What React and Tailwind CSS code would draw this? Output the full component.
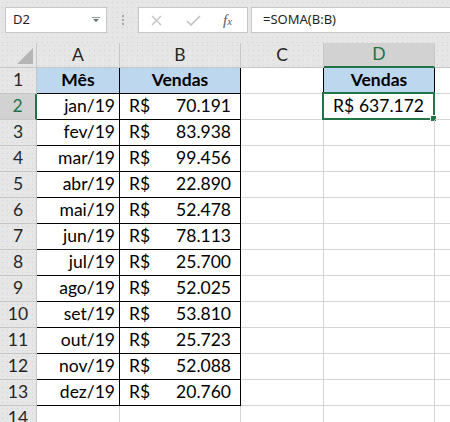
import React from "react";

const rows = [
  ["jan/19", "70.191"],
  ["fev/19", "83.938"],
  ["mar/19", "99.456"],
  ["abr/19", "22.890"],
  ["mai/19", "52.478"],
  ["jun/19", "78.113"],
  ["jul/19", "25.700"],
  ["ago/19", "52.025"],
  ["set/19", "53.810"],
  ["out/19", "25.723"],
  ["nov/19", "52.088"],
  ["dez/19", "20.760"],
];

const dots =
  "bg-[#e6e6e6] bg-[radial-gradient(circle,#d3d3d3_0.7px,transparent_1px)] bg-[length:5px_5px]";

const Cell = ({ className = "", children }) => (
  <div className={`relative flex items-center border-r border-b ${className}`}>
    {children}
  </div>
);

const HeadCell = ({ className = "", children }) => (
  <Cell className={`justify-center border-[#c6c6c6] ${className}`}>{children}</Cell>
);

const NameBox = () => (
  <div className="ml-[5px] flex h-[26px] w-[102px] items-center justify-between border border-[#c6c6c6] bg-white pl-[7px] pr-[6px]">
    <span className="font-['Noto_Sans',sans-serif] text-[13px] text-[#1f1f1f]">D2</span>
    <svg width="8" height="6" viewBox="0 0 8 6">
      <rect x="0" y="0" width="8" height="1" fill="#8a958c" />
      <polygon points="1,2 7,2 4,5" fill="#5f7565" />
    </svg>
  </div>
);

const FormulaButtons = () => (
  <div className="flex h-[26px] w-[110px] items-center border border-[#c6c6c6] bg-white">
    <svg className="ml-[12px]" width="11" height="11" viewBox="0 0 11 11">
      <path d="M1 1 L10 10 M10 1 L1 10" stroke="#c2c2c2" strokeWidth="1.4" fill="none" />
    </svg>
    <svg className="ml-[24px]" width="15" height="11" viewBox="0 0 15 11">
      <path d="M1 6 L5 10 L14 1" stroke="#c2c2c2" strokeWidth="1.6" fill="none" />
    </svg>
    <span className="ml-[22px] font-['Liberation_Serif',serif] text-[15px] italic leading-none text-[#5a5a5a]">
      f<span className="text-[11px]">x</span>
    </span>
  </div>
);

const Toolbar = () => (
  <div className={`flex h-[43px] items-start pt-[7px] ${dots}`}>
    <NameBox />
    <div className="flex w-[31px] flex-col items-center gap-[2px] pt-[8px]">
      <span className="h-[2px] w-[2px] bg-[#a8a8a8]" />
      <span className="h-[2px] w-[2px] bg-[#a8a8a8]" />
      <span className="h-[2px] w-[2px] bg-[#a8a8a8]" />
    </div>
    <FormulaButtons />
    <div className="ml-[3px] flex h-[26px] flex-1 items-center border border-r-0 border-[#c6c6c6] bg-white pl-[11px]">
      <span className="font-['Noto_Sans',sans-serif] text-[13px] text-[#1f1f1f]">=SOMA(B:B)</span>
    </div>
  </div>
);

const App = () => {
  return (
    <div className="h-[422px] w-[450px] overflow-hidden bg-white font-['Lato',sans-serif] text-[17.5px] text-black">
      <Toolbar />
      <div className="grid grid-cols-[37px_83px_121px_83px_111px_1fr] grid-rows-[25px_repeat(14,26px)]">
        {/* column headers */}
        <HeadCell className={dots}>
          <svg className="absolute bottom-[3px] right-[3px]" width="16" height="16" viewBox="0 0 16 16">
            <polygon points="16,0 16,16 0,16" fill="#b5b5b5" />
          </svg>
        </HeadCell>
        <HeadCell className={`text-[#262626] ${dots}`}>A</HeadCell>
        <HeadCell className={`text-[#262626] ${dots}`}>B</HeadCell>
        <HeadCell className={`text-[#262626] ${dots}`}>C</HeadCell>
        <HeadCell className="border-b-2 border-b-[#217346] bg-[#d2d2d2] text-[#217346]">D</HeadCell>
        <HeadCell className={`border-r-0 ${dots}`} />

        {/* row 1 */}
        <HeadCell className={`text-[#262626] ${dots}`}>1</HeadCell>
        <Cell className="justify-center border-black bg-[#bdd7ee] font-bold">Mês</Cell>
        <Cell className="justify-center border-black bg-[#bdd7ee] font-bold">Vendas</Cell>
        <Cell className="border-r-black border-b-[#d4d4d4]" />
        <Cell className="justify-center border-black bg-[#bdd7ee] font-bold">Vendas</Cell>
        <Cell className="border-r-0 border-[#d4d4d4]" />

        {rows.map(([mes, valor], i) => {
          const n = i + 2;
          const sel = n === 2;
          return (
            <React.Fragment key={mes}>
              {sel ? (
                <HeadCell className="border-r-2 border-r-[#217346] bg-[#d2d2d2] text-[#217346]">{n}</HeadCell>
              ) : (
                <HeadCell className={`text-[#262626] ${dots}`}>{n}</HeadCell>
              )}
              <Cell className="justify-end border-black pr-[4px]">{mes}</Cell>
              <Cell className="justify-between border-black pl-[9px] pr-[9px]">
                <span>R$</span>
                <span>{valor}</span>
              </Cell>
              <Cell className="border-[#d4d4d4]" />
              {sel ? (
                <Cell className="justify-between border-[#d4d4d4] pl-[9px] pr-[10px]">
                  <span>R$</span>
                  <span>637.172</span>
                  <div className="absolute -bottom-[1px] -left-[2px] -right-[1px] -top-[2px] border-2 border-[#217346]">
                    <div className="absolute -bottom-[4px] -right-[4px] h-[7px] w-[7px] border border-white bg-[#217346]" />
                  </div>
                </Cell>
              ) : (
                <Cell className="border-[#d4d4d4]" />
              )}
              <Cell className="border-r-0 border-[#d4d4d4]" />
            </React.Fragment>
          );
        })}

        {/* row 14 */}
        <HeadCell className={`text-[#262626] ${dots}`}>14</HeadCell>
        <Cell className="border-[#d4d4d4]" />
        <Cell className="border-[#d4d4d4]" />
        <Cell className="border-[#d4d4d4]" />
        <Cell className="border-[#d4d4d4]" />
        <Cell className="border-r-0 border-[#d4d4d4]" />
      </div>
    </div>
  );
};

export default App;
